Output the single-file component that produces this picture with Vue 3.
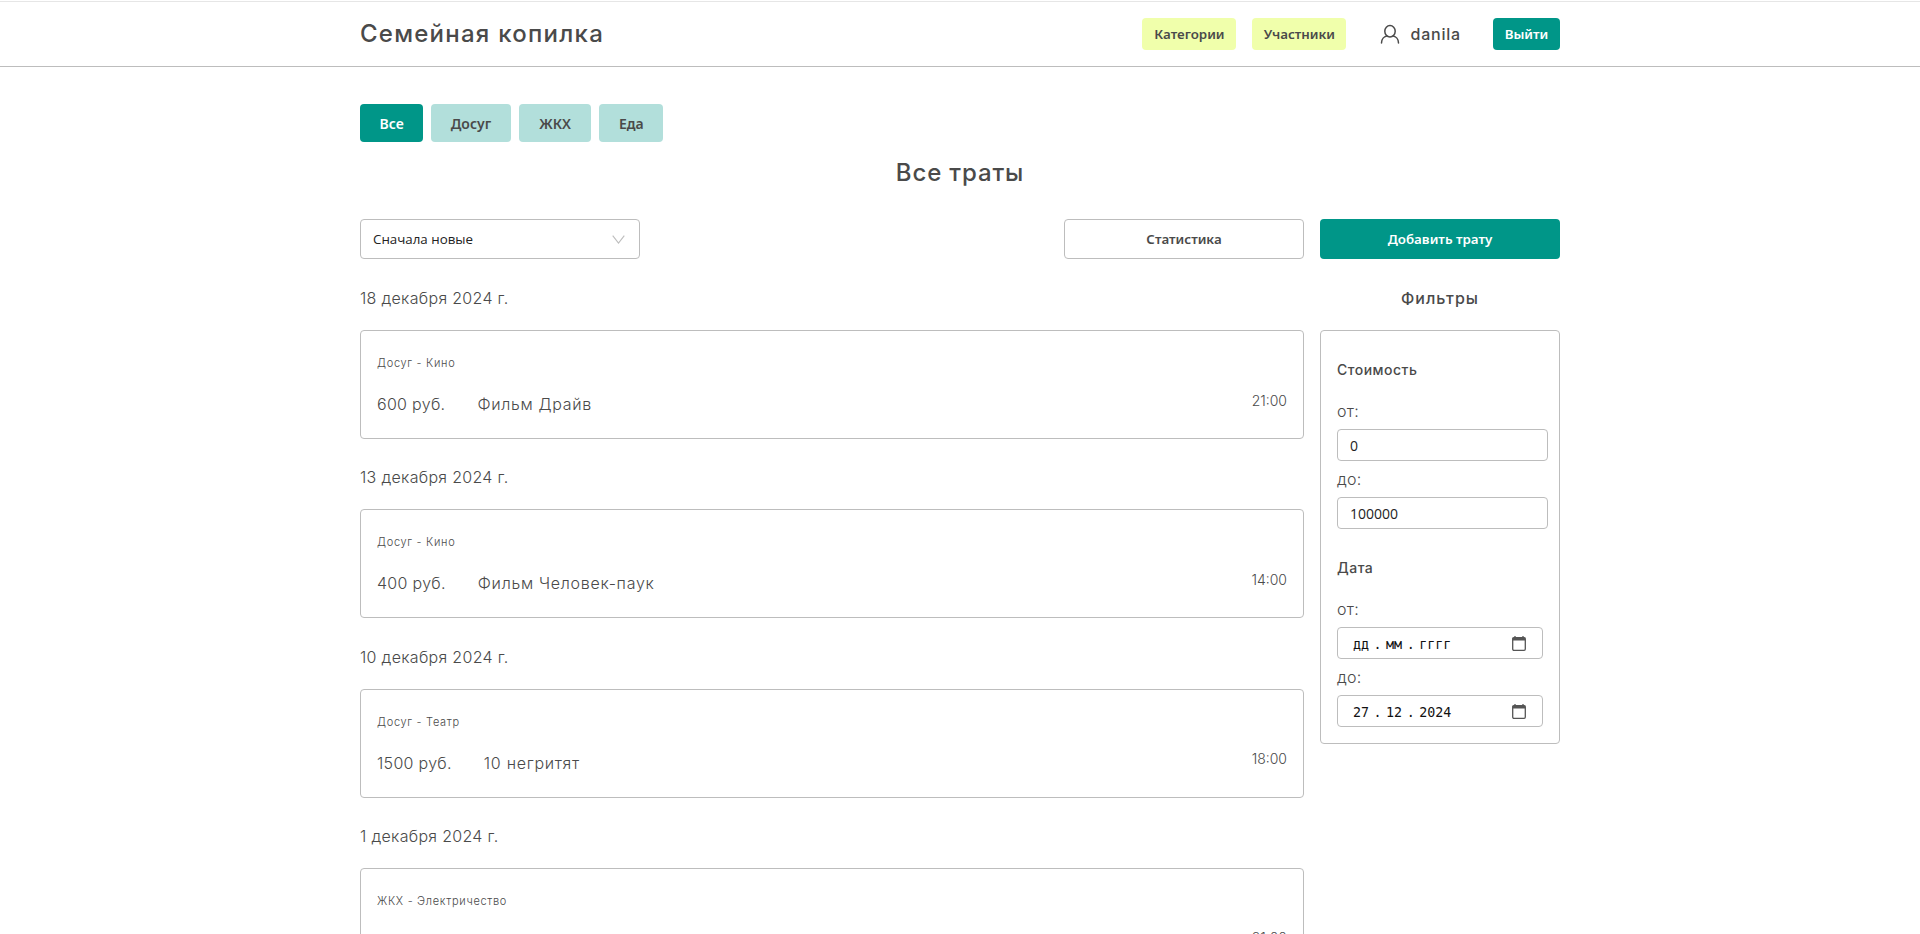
<script setup>
const tabs = [
  { name: 'Все', active: true },
  { name: 'Досуг' },
  { name: 'ЖКХ' },
  { name: 'Еда' },
]
const groups = [
  { date: '18 декабря 2024 г.', cat: 'Досуг - Кино', price: '600 руб.', title: 'Фильм Драйв', time: '21:00' },
  { date: '13 декабря 2024 г.', cat: 'Досуг - Кино', price: '400 руб.', title: 'Фильм Человек-паук', time: '14:00' },
  { date: '10 декабря 2024 г.', cat: 'Досуг - Театр', price: '1500 руб.', title: '10 негритят', time: '18:00' },
  { date: '1 декабря 2024 г.', cat: 'ЖКХ - Электричество', price: '3000 руб.', title: 'Счёт за свет', time: '21:00' },
]
const dates = [
  { label: 'от:', parts: ['дд', 'мм', 'гггг'] },
  { label: 'до:', parts: ['27', '12', '2024'] },
]
</script>

<template>
  <div class="page">
    <header class="header">
      <div class="wrap header-row">
        <div class="logo">Семейная копилка</div>
        <nav class="nav">
          <a class="btn-lime">Категории</a>
          <a class="btn-lime">Участники</a>
          <div class="user">
            <svg width="20" height="20" viewBox="0 0 20 20" fill="none" stroke="#4a4a4a" stroke-width="1.5" stroke-linecap="round">
              <ellipse cx="10" cy="7.2" rx="5.2" ry="5.7" />
              <path d="M1.5 19c0-3.8 2.7-6.3 5.2-6.9M18.5 19c0-3.8-2.7-6.3-5.2-6.9" />
            </svg>
            <span>danila</span>
          </div>
          <a class="btn-exit">Выйти</a>
        </nav>
      </div>
    </header>

    <main class="wrap main">
      <div class="tabs">
        <button v-for="t in tabs" :key="t.name" class="tab" :class="{ active: t.active }">{{ t.name }}</button>
      </div>
      <h1 class="heading">Все траты</h1>

      <div class="toolbar">
        <div class="select">
          <span>Сначала новые</span>
          <svg width="13" height="9" viewBox="0 0 13 9" fill="none" stroke="#bdbdbd" stroke-width="1.1">
            <path d="M0.7 0.7l5.8 7.3 5.8-7.3" />
          </svg>
        </div>
        <div class="toolbar-right">
          <button class="btn-outline">Статистика</button>
          <button class="btn-add">Добавить трату</button>
        </div>
      </div>

      <div class="columns">
        <section class="list">
          <div v-for="g in groups" :key="g.date" class="group">
            <div class="date">{{ g.date }}</div>
            <article class="card">
              <div class="cat">{{ g.cat }}</div>
              <div class="card-row">
                <div class="card-main">
                  <span class="price">{{ g.price }}</span>
                  <span class="title">{{ g.title }}</span>
                </div>
                <span class="time">{{ g.time }}</span>
              </div>
            </article>
          </div>
        </section>

        <aside class="side">
          <div class="side-title">Фильтры</div>
          <div class="filters">
            <div class="f-head">Стоимость</div>
            <label class="f-label">от:</label>
            <input class="f-input" type="text" value="0" />
            <label class="f-label f-label-next">до:</label>
            <input class="f-input" type="text" value="100000" />
            <div class="f-head f-head-next">Дата</div>
            <template v-for="(d, i) in dates" :key="d.label">
              <label class="f-label" :class="{ 'f-label-next': i > 0 }">{{ d.label }}</label>
              <div class="f-date">
                <div class="f-date-text">
                  <span>{{ d.parts[0] }}</span><span class="sep">.</span><span>{{ d.parts[1] }}</span><span class="sep">.</span><span>{{ d.parts[2] }}</span>
                </div>
                <svg width="14" height="15" viewBox="0 0 14 15" fill="none">
                  <path d="M3 0v2M11 0v2" stroke="#555" stroke-width="1.3" />
                  <rect x="0.7" y="1.7" width="12.6" height="12.6" rx="1.2" stroke="#555" stroke-width="1.3" />
                  <rect x="0.7" y="1.7" width="12.6" height="2.8" fill="#555" />
                </svg>
              </div>
            </template>
          </div>
        </aside>
      </div>
    </main>
  </div>
</template>

<style>
html, body { margin: 0; background: #fff; scrollbar-width: none; }
</style>

<style scoped>
.page {
  font-family: Inter, "Noto Sans", sans-serif;
  color: #4a4a4a;
  padding-top: 1px;
}
.wrap { width: 1200px; margin: 0 auto; }
.header { border-top: 1px solid #e6e6e6; border-bottom: 1px solid #bdbdbd; }
.header-row { display: flex; align-items: center; justify-content: space-between; height: 64px; }
.logo { font-size: 24px; font-weight: 500; letter-spacing: 1.25px; margin-top: -1px; }
.nav { display: flex; align-items: center; height: 32px; }
.btn-lime, .btn-exit {
  display: flex; align-items: center; justify-content: center;
  height: 32px; border-radius: 4px;
  font-family: "Noto Sans", sans-serif; font-size: 13.33px; font-weight: 600;
}
.btn-lime { width: 94px; background: #f0ffab; margin-right: 16px; }
.btn-exit { width: 67px; background: #009688; color: #fff; }
.user { display: flex; align-items: center; gap: 10px; margin: 0 32px 0 18px; font-size: 16px; font-weight: 500; letter-spacing: 0.8px; }
.main { padding-top: 37px; }
.tabs { display: flex; gap: 8px; }
.tab {
  height: 38px; padding: 0 19.5px; border: 0; border-radius: 4px;
  background: #b2dfdb; color: #4a4a4a;
  font-family: "Noto Sans", sans-serif; font-size: 14px; font-weight: 600;
}
.tab:nth-child(3) { padding: 0 20.5px; }
.tab.active { background: #009688; color: #fff; }
.heading { margin: 15px 0 0; height: 32px; line-height: 32px; text-align: center; font-size: 24px; font-weight: 500; letter-spacing: 0.85px; }
.toolbar { display: flex; justify-content: space-between; margin-top: 30px; }
.select {
  box-sizing: border-box; width: 280px; height: 40px; padding: 0 14px 0 12px;
  display: flex; align-items: center; justify-content: space-between;
  border: 1px solid #bdbdbd; border-radius: 4px;
  font-family: "Open Sans", "Noto Sans", sans-serif; font-size: 13.33px; color: #222;
}
.toolbar-right { display: flex; gap: 16px; }
.btn-outline, .btn-add {
  box-sizing: border-box; width: 240px; height: 40px; border-radius: 4px;
  font-family: "Noto Sans", sans-serif; font-size: 13.33px; font-weight: 600;
}
.btn-outline { background: #fff; border: 1px solid #bdbdbd; color: #4a4a4a; }
.btn-add { background: #009688; border: 0; color: #fff; }
.columns { display: flex; justify-content: space-between; margin-top: 28px; }
.list { width: 944px; }
.group { margin-bottom: 27.33px; }
.date { height: 22px; line-height: 22px; font-size: 16px; font-weight: 300; letter-spacing: 0.3px; margin-bottom: 21px; }
.card {
  box-sizing: border-box; height: 109px; padding: 24px 16px 0;
  border: 1px solid #bdbdbd; border-radius: 4px;
}
.cat { font-size: 11px; font-weight: 300; line-height: 16px; letter-spacing: 0.7px; }
.card-row { display: flex; justify-content: space-between; margin-top: 21px; font-size: 16px; font-weight: 300; }
.card-main { display: flex; gap: 32px; line-height: 24px; }
.price { letter-spacing: 0.3px; }
.title { letter-spacing: 0.7px; }
.time { font-size: 14px; line-height: 20px; margin-top: -1.5px; }
.side { width: 240px; }
.side-title { height: 22px; line-height: 22px; text-align: center; font-size: 16px; font-weight: 500; letter-spacing: 1px; margin-bottom: 21px; }
.filters {
  box-sizing: border-box; height: 414px; padding: 29px 11px 0 16px;
  border: 1px solid #bdbdbd; border-radius: 4px;
}
.f-head { font-size: 14px; font-weight: 500; line-height: 20px; letter-spacing: 0.5px; }
.f-head-next { margin-top: 29px; }
.f-label { display: block; margin: 20px 0 7px; font-size: 16px; font-weight: 300; line-height: 22px; letter-spacing: 0.3px; }
.f-label-next { margin-top: 7px; }
.f-input {
  display: block; box-sizing: border-box; width: 100%; height: 32px; padding: 0 12px;
  border: 1px solid #bdbdbd; border-radius: 4px; outline: 0;
  font-family: "Open Sans", "Noto Sans", sans-serif; font-size: 14px; color: #222;
}
.f-date {
  box-sizing: border-box; width: 206px; height: 32px; padding: 0 16px 0 15px;
  display: flex; align-items: center; justify-content: space-between;
  border: 1px solid #bdbdbd; border-radius: 4px;
}
.f-date-text {
  display: flex; font-family: "DejaVu Sans Mono", monospace; font-size: 13.33px; color: #111;
  margin-top: 2px;
}
.sep { margin: 0 4.5px; }
</style>
